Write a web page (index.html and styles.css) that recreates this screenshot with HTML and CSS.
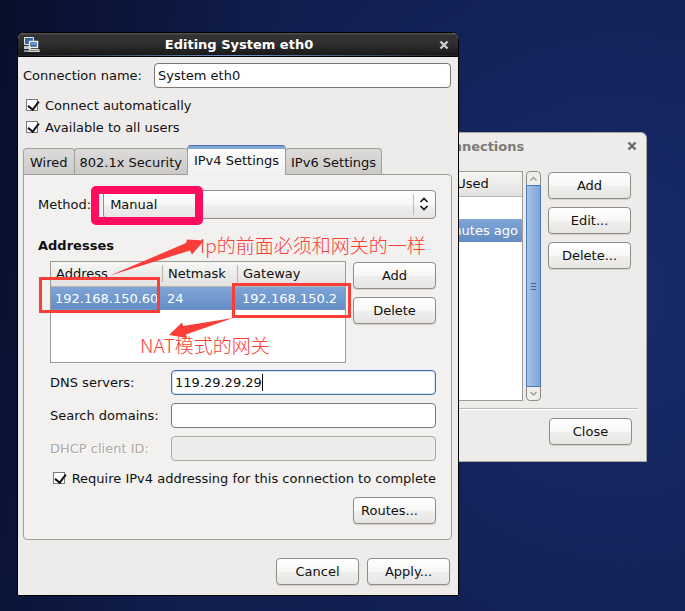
FILE: index.html
```html
<!DOCTYPE html>
<html lang="en">
<head>
<meta charset="utf-8">
<title>Editing System eth0</title>
<link rel="stylesheet" href="styles.css">
</head>
<body>
<main class="desktop">
  <section class="window manager" aria-label="Network Connections">
    <header class="manager-title">
      <h2>Network Connections</h2>
      <button class="close" type="button" aria-label="Close window">
        <svg width="10" height="10" viewBox="0 0 10 10"><path d="M1.5 1.5l7 7M8.5 1.5l-7 7"/></svg>
      </button>
    </header>
    <div class="manager-body">
      <div class="list">
        <table class="used">
          <thead><tr><th>Last Used</th></tr></thead>
          <tbody>
            <tr><td></td></tr>
            <tr class="selected"><td>17 minutes ago</td></tr>
          </tbody>
        </table>
      </div>
      <div class="scrollbar">
        <svg class="cap" width="13" height="13" viewBox="0 0 13 13"><path d="M3.5 8.5l3-3 3 3"/></svg>
        <div class="thumb"><i></i><i></i><i></i></div>
        <svg class="cap" width="13" height="13" viewBox="0 0 13 13"><path d="M3.5 5l3 3 3-3"/></svg>
      </div>
      <div class="stack">
        <button class="btn" type="button">Add</button>
        <button class="btn" type="button">Edit...</button>
        <button class="btn" type="button">Delete...</button>
      </div>
    </div>
    <footer class="manager-foot"><button class="btn" type="button">Close</button></footer>
  </section>

  <section class="window editor" aria-label="Editing System eth0">
    <header class="editor-title">
      <svg class="app" width="17" height="17" viewBox="0 0 17 17">
        <path d="M1.5 1.5h9v7h-9z" fill="#3565a5" stroke="#e4e4de"/>
        <path d="M1 10h7v3H1z" fill="#c9c9c2"/>
        <path d="M6.5 5.5h8v6h-8z" fill="#3565a5" stroke="#f0f0ea" stroke-width="1.5"/>
        <path d="M8 7h5v2H8z" fill="#6c96cd"/>
        <path d="M6 13h10l1 3H5z" fill="#d6d6cf"/>
        <path d="M7 14.5h8" stroke="#85857e"/>
        <path d="M1 15h4" stroke="#7795b8" stroke-width="2"/>
      </svg>
      <h1>Editing System eth0</h1>
      <button class="close" type="button" aria-label="Close window">
        <svg width="10" height="10" viewBox="0 0 10 10"><path d="M1.5 1.5l7 7M8.5 1.5l-7 7"/></svg>
      </button>
    </header>
    <form class="editor-body">
      <div class="name-row">
        <label for="name">Connection name:</label>
        <input class="entry" id="name" type="text" value="System eth0">
      </div>
      <label class="check"><input type="checkbox" checked>Connect automatically</label>
      <label class="check"><input type="checkbox" checked>Available to all users</label>

      <div class="tabs" role="tablist">
        <button class="tab" type="button" role="tab">Wired</button>
        <button class="tab" type="button" role="tab">802.1x Security</button>
        <button class="tab active" type="button" role="tab" aria-selected="true">IPv4 Settings</button>
        <button class="tab" type="button" role="tab">IPv6 Settings</button>
      </div>
      <div class="page" role="tabpanel">
        <div class="method-row">
          <label for="method">Method:</label>
          <div class="combo">
            <select id="method"><option>Manual</option></select>
            <svg class="arrows" width="10" height="14" viewBox="0 0 10 14"><path d="M1.5 5L5 1.5 8.5 5M1.5 9L5 12.5 8.5 9"/></svg>
          </div>
        </div>
        <h3>Addresses</h3>
        <div class="indent">
          <div class="address-row">
            <div class="list">
              <table class="addresses">
                <thead><tr><th>Address</th><th>Netmask</th><th>Gateway</th></tr></thead>
                <tbody><tr class="selected"><td>192.168.150.60</td><td>24</td><td>192.168.150.2</td></tr></tbody>
              </table>
            </div>
            <div class="stack">
              <button class="btn" type="button">Add</button>
              <button class="btn" type="button">Delete</button>
            </div>
          </div>
          <div class="fields">
            <label for="dns">DNS servers:</label>
            <div class="focused"><input class="entry" id="dns" type="text" value="119.29.29.29"><span class="caret"></span></div>
            <label for="search">Search domains:</label>
            <input class="entry" id="search" type="text">
            <label class="off" for="dhcp">DHCP client ID:</label>
            <input class="entry" id="dhcp" type="text" disabled>
          </div>
          <label class="check require"><input type="checkbox" checked>Require IPv4 addressing for this connection to complete</label>
          <div class="routes"><button class="btn routes-btn" type="button">Routes...</button></div>
        </div>
      </div>
      <footer class="actions">
        <button class="btn" type="button">Cancel</button>
        <button class="btn" type="button">Apply...</button>
      </footer>
    </form>
    <svg class="notes" width="442" height="564" viewBox="17 32 442 564">
      <rect class="pink" x="95" y="190" width="104" height="31" rx="1"/>
      <rect class="red" x="40.5" y="278.5" width="118" height="33"/>
      <rect class="red" x="233.5" y="284.5" width="116" height="32"/>
      <path class="arrow" d="M110 275.5L186 243 187 239.5 204 240.5 192 254.5 190 250.5Z"/>
      <path class="arrow" d="M233 318L183 326 182 322.5 169 335 187 338 186 334.5Z"/>
      <text x="200" y="253">Ip的前面必须和网关的一样</text>
      <text x="140" y="353">NAT模式的网关</text>
    </svg>
  </section>
</main>
</body>
</html>
```
FILE: styles.css
```css
* { box-sizing: border-box; }

body {
  margin: 0;
  font: 13px/17px "DejaVu Sans", sans-serif;
  color: #101010;
}

button, input, select { font: inherit; color: inherit; margin: 0; }
h1, h2, h3 { margin: 0; font-size: 13px; line-height: 17px; font-weight: bold; }

.desktop {
  position: relative;
  min-height: 100vh;
  overflow: hidden;
  background:
    radial-gradient(circle at 88% 48%, #172b6c 0, rgba(23, 43, 108, 0) 62%),
    linear-gradient(100deg, #080f2b 0, #101d4d 35%, #122052 100%);
}

.window { position: absolute; background: #edeceb; }

/* Connection list window */
.manager {
  top: 132px;
  left: 241px;
  right: 38px;
  border: 1px solid #a6a5a2;
  border-radius: 6px 6px 0 0;
}
.manager-title, .editor-title { display: flex; align-items: center; }
.manager-title { height: 26px; padding: 0 8px 0 24px; color: #7c7b78; }
.manager-title h2, .editor-title h1 { flex: 1; text-align: center; }
.close { display: flex; padding: 1px; border: 0; background: none; }
.close path { fill: none; stroke: #6a6967; stroke-width: 2.4; }

.manager-body { display: flex; padding: 12px 15px 0 11px; }
.list { flex: 1; background: #fff; border: 1px solid #9c9b98; }
table { width: 100%; border-collapse: collapse; }
th, td { height: 24px; padding: 0 4px; text-align: left; font-weight: normal; white-space: nowrap; }
th { background: linear-gradient(#f6f6f5, #e2e1df); border-bottom: 1px solid #b5b4b1; }
.selected td { background: linear-gradient(#80a5d7, #638dc4); color: #fff; }
.used th { padding-left: 171px; }
.used td { height: 23px; text-align: right; }

.scrollbar {
  display: flex;
  flex-direction: column;
  width: 15px;
  height: 230px;
  margin: 0 7px 0 3px;
  border: 1px solid #8d8c89;
  border-radius: 4px;
  background: #efeeed;
}
.cap path { fill: none; stroke: #9a9996; stroke-width: 1.3; }
.thumb {
  flex: 1;
  display: flex;
  flex-direction: column;
  align-items: center;
  justify-content: center;
  gap: 2px;
  margin: 0 -1px;
  border: 1px solid #4f79b0;
  background: linear-gradient(90deg, #a3c3eb, #7fa5d8);
}
.thumb i { width: 5px; height: 1px; background: #3d6497; }

.stack { display: flex; flex-direction: column; gap: 8px; padding-top: 1px; }
.btn {
  width: 83px;
  height: 27px;
  padding: 0 4px;
  border: 1px solid #8f8c89;
  border-radius: 4px;
  background: linear-gradient(#fff 0, #f7f7f6 50%, #efefee 52%, #e6e5e4 100%);
  box-shadow: 0 1px 1px rgba(0, 0, 0, .12);
}
.manager-foot {
  display: flex;
  justify-content: flex-end;
  margin: 7px 8px 0;
  padding: 9px 6px 16px;
  border-top: 1px solid #bab9b6;
  box-shadow: inset 0 1px #fff;
}

/* Connection editor window */
.editor {
  top: 32px;
  left: 17px;
  right: 226px;
  border: 1px solid #000;
  border-radius: 7px 7px 0 0;
}
.editor-title {
  height: 24px;
  padding: 0 8px 0 5px;
  border-bottom: 1px solid #000;
  border-radius: 6px 6px 0 0;
  background:
    linear-gradient(90deg, #222, #6c95cc 50%, #222) bottom / 100% 1px no-repeat,
    linear-gradient(#555 0, #333 10%, #2e2e2e 50%, #161616 100%);
  color: #fff;
}
.editor-title .close path { stroke: #cfcfcf; }

.editor-body { padding: 6px 6px 10px 5px; }
.name-row { display: flex; align-items: center; gap: 12px; margin-right: 1px; margin-bottom: 6px; }
.entry {
  flex: 1;
  width: 100%;
  min-width: 0;
  height: 25px;
  padding: 0 3px;
  border: 1px solid #7a7774;
  border-radius: 4px;
  background: #fff;
  outline: 0;
}
.check { display: flex; align-items: center; gap: 7px; height: 22px; padding-left: 3px; }
.check input {
  appearance: none;
  width: 12px;
  height: 12px;
  border: 1px solid #7d7b78;
  background: #fff;
  position: relative;
}
.check input:checked::after {
  content: "";
  position: absolute;
  left: 3px;
  top: -1px;
  width: 5px;
  height: 9px;
  border: solid #111;
  border-width: 0 2px 2px 0;
  transform: rotate(38deg);
}

.tabs { display: flex; align-items: flex-end; margin-top: 7px; }
.tab {
  height: 26px;
  margin-right: -1px;
  padding: 1px 5px 0;
  border: 1px solid #a09f9c;
  border-bottom: 0;
  border-radius: 4px 4px 0 0;
  background: linear-gradient(#dddcdb, #cbcac8);
  white-space: nowrap;
}
.tab:first-child { padding: 1px 6px 0; }
.tab.active {
  position: relative;
  height: 30px;
  margin-bottom: -1px;
  padding: 0 6px 1px;
  border-top: 1px solid #456fa5;
  background: linear-gradient(#82a8da 0 3px, #fbfbfb 3px, #f2f1f0 100%);
}
.page {
  padding: 15px 15px;
  border: 1px solid #a09f9c;
  border-radius: 0 4px 4px 4px;
  padding-left: 14px;
  background: #f2f1f0;
}
.method-row { display: flex; align-items: center; gap: 12px; }
.combo { position: relative; flex: 1; display: flex; }
.combo select {
  appearance: none;
  flex: 1;
  height: 29px;
  padding: 0 6px;
  border: 1px solid #8f8c89;
  border-radius: 4px;
  background:
    linear-gradient(#bbbab7, #bbbab7) right 21px center / 1px 21px no-repeat,
    linear-gradient(#fff 0, #f7f7f6 50%, #efefee 52%, #e6e5e4 100%);
}
.arrows { position: absolute; right: 7px; top: 7px; pointer-events: none; }
.arrows path { fill: none; stroke: #111; stroke-width: 1.6; }
.page h3 { margin: 18px 0 7px; }
.indent { padding-left: 12px; }
.address-row { display: flex; gap: 7px; }
.address-row .list { height: 102px; }
.addresses { table-layout: fixed; }
.addresses th:nth-child(1) { width: 111px; }
.addresses th:nth-child(2) { width: 75px; }
.addresses th { padding: 0 5px; }
.addresses th + th {
  padding-left: 6px;
  background:
    linear-gradient(#b5b4b1, #b5b4b1) left center / 1px 17px no-repeat,
    linear-gradient(#f6f6f5, #e2e1df);
}
.addresses td + td { padding-left: 5px; }
.fields {
  display: grid;
  grid-template-columns: 113px 1fr;
  gap: 8px;
  align-items: center;
  margin-top: 7px;
}
.off { color: #aaa9a6; text-shadow: 1px 1px #fff; }
.entry:disabled { background: #edeceb; border-color: #aaa9a6; }
.focused { position: relative; display: flex; }
.focused .entry { border-color: #456fa5; box-shadow: inset 0 0 0 1px #d5e2f3; }
.caret { position: absolute; left: 91px; top: 4px; width: 1px; height: 17px; background: #000; }
.require { margin-top: 6px; padding-left: 3px; white-space: nowrap; }
.routes { display: flex; justify-content: flex-end; margin-top: 8px; }
.routes-btn { text-align: left; padding-left: 7px; }
.actions { display: flex; justify-content: flex-end; gap: 8px; padding: 18px 2px 0 0; }

/* Hand-drawn remarks over the dialog */
.notes { position: absolute; left: -1px; top: -1px; pointer-events: none; }
.pink { fill: none; stroke: #ff0d5c; stroke-width: 8; }
.red { fill: none; stroke: #fb3d38; stroke-width: 3; }
.arrow { fill: #fb3d38; }
.notes text { font: 300 19px "Noto Sans CJK SC", sans-serif; fill: #fb3d38; }
```
